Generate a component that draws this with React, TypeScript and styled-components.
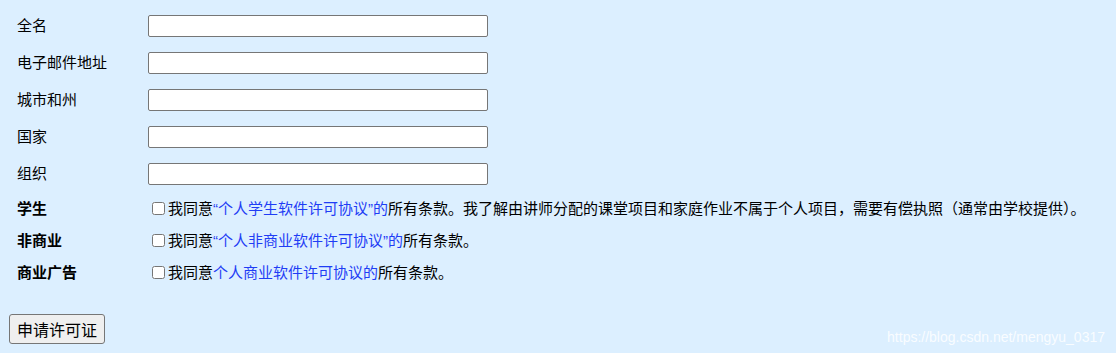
import styled, {createGlobalStyle} from "styled-components";
import {Fragment} from "react";

const GlobalStyle = createGlobalStyle`
    html, body {
        margin: 0;
        padding: 0;
        background-color: #dcefff;
    }

    body {
        font-family: "Liberation Sans", "Noto Sans CJK SC", sans-serif;
        font-size: 15px;
        color: #000;
    }
`

const StyledPage = styled.div`
    position: relative;

    box-sizing: border-box;
    width: 1116px;
    height: 353px;

    padding: 7px 9px 0 9px;

    background-color: #dcefff;
`

const StyledForm = styled.form`
    display: grid;

    grid-template-columns: 139px 1fr;
    grid-auto-rows: auto;
`

const StyledLabel = styled.label<{ $bold?: boolean, $tall?: boolean }>`
    display: flex;

    align-items: center;

    height: ${props => props.$tall ? "37px" : "32px"};

    padding-left: 8px;

    font-weight: ${props => props.$bold ? 700 : 400};
    line-height: 1;
`

const StyledCell = styled.div<{ $tall?: boolean }>`
    display: flex;

    flex-direction: row;
    align-items: center;

    height: ${props => props.$tall ? "37px" : "32px"};

    white-space: nowrap;
    line-height: 1;
`

const StyledInput = styled.input`
    box-sizing: border-box;

    width: 340px;
    height: 22px;

    padding: 1px 2px;

    border: 1px solid #767676;
    border-radius: 2px;

    background-color: #fff;
    font: inherit;
`

const StyledCheckbox = styled.input`
    width: 13px;
    height: 13px;

    margin: 0 3px 0 4px;
`

const StyledLink = styled.a`
    color: #1f3df5;
    text-decoration: none;
`

const StyledButton = styled.button`
    box-sizing: border-box;

    height: 30px;

    margin-top: 26px;
    padding: 0 7px;

    border: 1px solid #767676;
    border-radius: 3px;

    background-color: #efefef;
    color: #000;

    font-family: "Noto Sans CJK SC", "Liberation Sans", sans-serif;
    font-size: 16px;
    line-height: 1;
`

const StyledWatermark = styled.div`
    position: absolute;

    right: 11px;
    bottom: 8px;

    font-family: "Liberation Sans", Arial, sans-serif;
    font-size: 14px;
    color: rgba(255, 255, 255, 0.85);
`

const fields = ["全名", "电子邮件地址", "城市和州", "国家", "组织"]

const licenses = [
	{
		label: "学生",
		link: "“个人学生软件许可协议”的",
		rest: "所有条款。我了解由讲师分配的课堂项目和家庭作业不属于个人项目，需要有偿执照（通常由学校提供）。",
	},
	{label: "非商业", link: "“个人非商业软件许可协议”的", rest: "所有条款。"},
	{label: "商业广告", link: "个人商业软件许可协议的", rest: "所有条款。"},
]

export default function App() {
	return (
		<>
			<GlobalStyle/>
			<StyledPage>
				<StyledForm onSubmit={e => e.preventDefault()}>
					{fields.map((name) => (
						<Fragment key={name}>
							<StyledLabel $tall>{name}</StyledLabel>
							<StyledCell $tall>
								<StyledInput type="text"/>
							</StyledCell>
						</Fragment>
					))}
					{licenses.map((license) => (
						<Fragment key={license.label}>
							<StyledLabel $bold>{license.label}</StyledLabel>
							<StyledCell>
								<StyledCheckbox type="checkbox"/>
								我同意<StyledLink href="#">{license.link}</StyledLink>{license.rest}
							</StyledCell>
						</Fragment>
					))}
				</StyledForm>
				<StyledButton type="button">申请许可证</StyledButton>
				<StyledWatermark>https://blog.csdn.net/mengyu_0317</StyledWatermark>
			</StyledPage>
		</>
	)
}
